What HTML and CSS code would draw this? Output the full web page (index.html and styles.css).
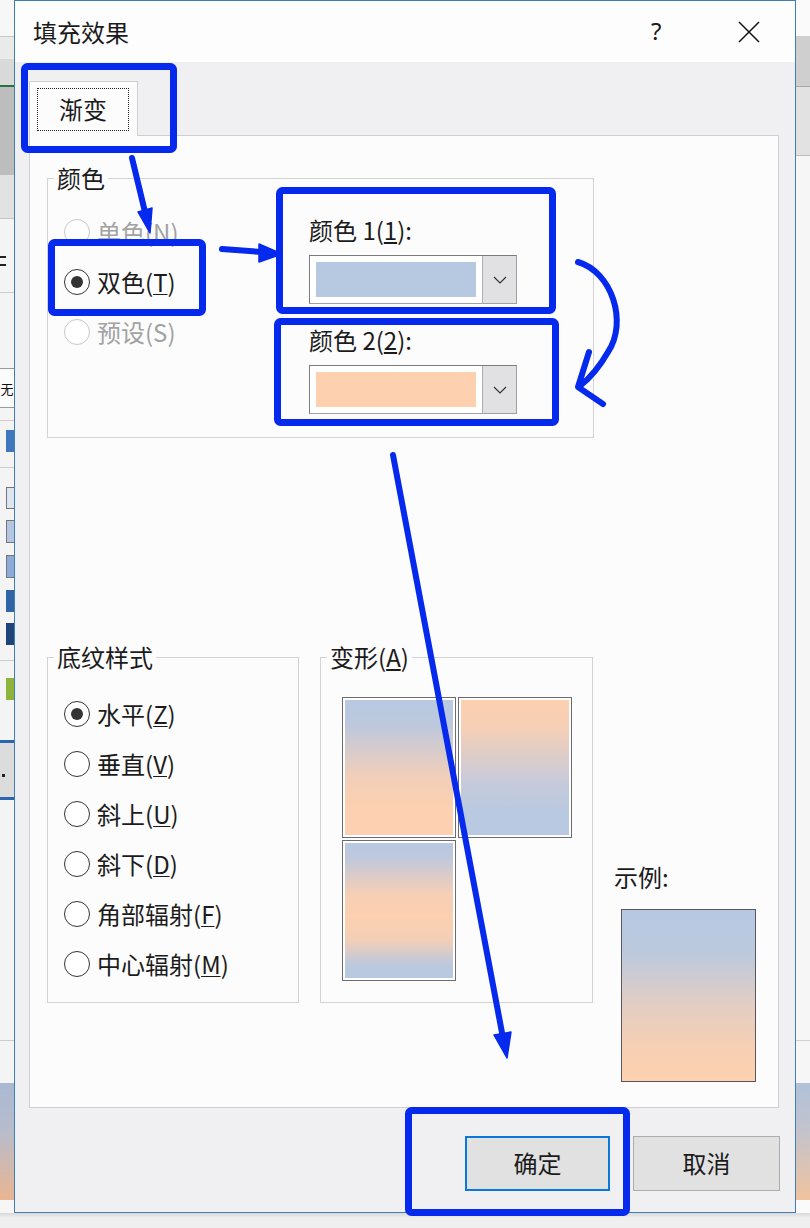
FILE: index.html
```html
<!DOCTYPE html>
<html lang="zh-CN">
<head>
<meta charset="utf-8">
<title>填充效果</title>
<link rel="stylesheet" href="styles.css">
</head>
<body>
<div class="screen">
  <div class="side side-left">
    <svg width="14" height="1213" viewBox="0 0 14 1213">
      <rect x="0" y="0" width="14" height="1213" fill="#f4f4f4"/>
      <rect x="0" y="0" width="14" height="36" fill="#f7f7f7"/>
      <rect x="0" y="36" width="14" height="1" fill="#c8c8c8"/>
      <rect x="0" y="37" width="14" height="22" fill="#eaeaea"/>
      <rect x="0" y="59" width="14" height="26" fill="#d9d9d9"/>
      <rect x="0" y="85" width="14" height="2" fill="#217346"/>
      <rect x="0" y="87" width="14" height="88" fill="#bdbdbd"/>
      <rect x="0" y="175" width="14" height="43" fill="#e2e2e2"/>
      <rect x="0" y="218" width="14" height="1" fill="#c4c4c4"/>
      <rect x="0" y="256" width="6" height="2" fill="#222"/>
      <rect x="0" y="264" width="6" height="2" fill="#222"/>
      <rect x="0" y="292" width="14" height="1" fill="#cccccc"/>
      <rect x="0" y="368" width="14" height="40" fill="#fbfbfb"/>
      <rect x="0" y="368" width="14" height="1" fill="#9a9a9a"/>
      <rect x="0" y="407" width="14" height="1" fill="#9a9a9a"/>
      <text x="0.5" y="394" font-size="13" font-family="Noto Sans CJK SC" fill="#111">无</text>
      <rect x="0" y="420" width="14" height="1" fill="#cccccc"/>
      <rect x="6" y="430" width="8" height="22" fill="#3f77bd"/>
      <rect x="0" y="467" width="14" height="1" fill="#cccccc"/>
      <rect x="6.5" y="487.5" width="8" height="21" fill="#dde5f0" stroke="#777"/>
      <rect x="6.5" y="520.5" width="8" height="22" fill="#b4c6e2" stroke="#777"/>
      <rect x="6.5" y="555.5" width="8" height="22" fill="#8eaad8" stroke="#777"/>
      <rect x="6" y="590" width="8" height="22" fill="#2f64a6"/>
      <rect x="6" y="623" width="8" height="22" fill="#1e4479"/>
      <rect x="0" y="660" width="14" height="1" fill="#cccccc"/>
      <rect x="6" y="678" width="8" height="22" fill="#8fb43c"/>
      <rect x="0" y="740" width="14" height="3" fill="#2b64b3"/>
      <rect x="0" y="743" width="14" height="55" fill="#dcdcdc"/>
      <rect x="2" y="774" width="3" height="3" fill="#222"/>
      <rect x="0" y="797" width="14" height="3" fill="#2b64b3"/>
      <rect x="0" y="1040" width="14" height="1" fill="#cccccc"/>
      <defs>
        <linearGradient id="lg" x1="0" y1="0" x2="0" y2="1">
          <stop offset="0" stop-color="#a9b9d3"/>
          <stop offset="0.4" stop-color="#b7bccb"/>
          <stop offset="1" stop-color="#e9b592"/>
        </linearGradient>
        <linearGradient id="rg" x1="0" y1="0" x2="0" y2="1">
          <stop offset="0" stop-color="#b0c1d9"/>
          <stop offset="0.4" stop-color="#c3c3cd"/>
          <stop offset="1" stop-color="#f0c39f"/>
        </linearGradient>
      </defs>
      <rect x="0" y="1083" width="14" height="117" fill="url(#lg)"/>
      <rect x="0" y="1200" width="14" height="13" fill="#f6f6f6"/>
    </svg>
  </div>

  <div class="dialog">
    <div class="titlebar">
      <div class="title">填充效果</div>
      <div class="help">?</div>
      <div class="close">
        <svg width="22" height="22" viewBox="0 0 22 22"><path d="M1 1 L21 21 M21 1 L1 21" stroke="#111" stroke-width="1.5" fill="none"/></svg>
      </div>
    </div>

    <div class="tabstrip">
      <div class="tab"><div class="tab-focus">渐变</div></div>
    </div>

    <div class="panel">
      <fieldset class="group group-color">
        <legend>颜色</legend>
        <div class="color-body">
          <div class="radios">
            <div class="radio disabled"><span class="dot"></span><span>单色(N)</span></div>
            <div class="radio checked"><span class="dot"></span><span>双色(<u>T</u>)</span></div>
            <div class="radio disabled"><span class="dot"></span><span>预设(S)</span></div>
          </div>
          <div class="pickers">
            <div class="picker-label">颜色 1(<u>1</u>):</div>
            <div class="combo">
              <div class="swatch-wrap"><div class="swatch swatch-blue"></div></div>
              <div class="drop"><svg width="14" height="8" viewBox="0 0 14 8"><path d="M1 1 L7 7 L13 1" stroke="#333" stroke-width="1.2" fill="none"/></svg></div>
            </div>
            <div class="picker-label second">颜色 2(<u>2</u>):</div>
            <div class="combo">
              <div class="swatch-wrap"><div class="swatch swatch-peach"></div></div>
              <div class="drop"><svg width="14" height="8" viewBox="0 0 14 8"><path d="M1 1 L7 7 L13 1" stroke="#333" stroke-width="1.2" fill="none"/></svg></div>
            </div>
          </div>
        </div>
      </fieldset>

      <div class="lower">
        <fieldset class="group group-pattern">
          <legend>底纹样式</legend>
          <div class="pattern-body">
            <div class="radio checked"><span class="dot"></span><span>水平(<u>Z</u>)</span></div>
            <div class="radio"><span class="dot"></span><span>垂直(<u>V</u>)</span></div>
            <div class="radio"><span class="dot"></span><span>斜上(<u>U</u>)</span></div>
            <div class="radio"><span class="dot"></span><span>斜下(<u>D</u>)</span></div>
            <div class="radio"><span class="dot"></span><span>角部辐射(<u>F</u>)</span></div>
            <div class="radio"><span class="dot"></span><span>中心辐射(<u>M</u>)</span></div>
          </div>
        </fieldset>

        <fieldset class="group group-variant">
          <legend>变形(<u>A</u>)</legend>
          <div class="tiles">
            <div class="tile"><div class="fill fill-down"></div></div>
            <div class="tile"><div class="fill fill-up"></div></div>
            <div class="tile"><div class="fill fill-mid"></div></div>
          </div>
        </fieldset>

        <div class="sample">
          <div class="sample-label">示例:</div>
          <div class="sample-box"></div>
        </div>
      </div>
    </div>

    <div class="buttons">
      <div class="btn btn-default">确定</div>
      <div class="btn">取消</div>
    </div>
  </div>

  <div class="side side-right">
    <svg width="14" height="1213" viewBox="0 0 14 1213">
      <rect x="0" y="0" width="14" height="1213" fill="#f6f6f6"/>
      <rect x="0" y="0" width="14" height="36" fill="#fafafa"/>
      <rect x="0" y="36" width="14" height="50" fill="#cfcfcf"/>
      <rect x="0" y="86" width="14" height="1" fill="#a8a8a8"/>
      <rect x="0" y="87" width="14" height="68" fill="#e2e2e2"/>
      <rect x="0" y="155" width="14" height="1" fill="#bbbbbb"/>
      <rect x="0" y="1040" width="14" height="1" fill="#d0d0d0"/>
      <rect x="0" y="1083" width="14" height="117" fill="url(#rg)"/>
      <rect x="0" y="1200" width="14" height="13" fill="#fafafa"/>
    </svg>
  </div>
  <div class="bottom-strip"></div>
</div>

<svg class="annotations" width="810" height="1228" viewBox="0 0 810 1228">
  <g fill="none" stroke="#0629ee" stroke-width="7" stroke-linejoin="round" stroke-linecap="round">
    <rect x="24.5" y="66.5" width="149" height="83" rx="3"/>
    <rect x="51.5" y="242.5" width="151" height="70" rx="3"/>
    <rect x="279.5" y="190.5" width="273" height="120" rx="3"/>
    <rect x="277.5" y="321.5" width="278" height="101" rx="3"/>
    <rect x="408.5" y="1110.5" width="218" height="102" rx="3"/>
  </g>
  <g fill="none" stroke="#0629ee" stroke-width="6" stroke-linecap="round" stroke-linejoin="round">
    <path d="M132 158 L145 212"/>
    <path d="M222 249 L262 252"/>
    <path d="M578 262 C 612 272, 628 322, 608 352 C 600 366, 590 378, 580 386"/>
    <path d="M589 352 L578 387 L603 404"/>
    <path d="M393 455 L503 1038"/>
  </g>
  <g fill="#0629ee" stroke="#0629ee" stroke-width="1.5" stroke-linejoin="round">
    <polygon points="150,233 152,208 138,212"/>
    <polygon points="282,254 259,244 259,262"/>
    <polygon points="507,1058 511,1032 494,1035"/>
  </g>
</svg>
</body>
</html>
```

FILE: styles.css
```css
* {
  box-sizing: border-box;
}

html, body {
  margin: 0;
  padding: 0;
}

body {
  position: relative;
  width: 810px;
  height: 1228px;
  overflow: hidden;
  background: #ececec;
  font-family: "Noto Sans CJK SC", "Noto Sans", sans-serif;
  color: #1b1b1b;
  font-size: 24px;
}

.screen {
  display: grid;
  grid-template-columns: 14px 782px 14px;
  grid-template-rows: 1213px 15px;
  width: 810px;
  height: 1228px;
}

.side svg {
  display: block;
}

.bottom-strip {
  grid-column: 1 / 4;
  background: linear-gradient(#d9d9d9, #efefef 5px, #efefef);
}

.dialog {
  display: flex;
  flex-direction: column;
  height: 1213px;
  border: 1px solid #3f7db5;
  background: #f0eff1;
}

/* title bar */
.titlebar {
  display: flex;
  align-items: center;
  height: 61px;
  flex: none;
  background: #fdfdfe;
  padding-left: 18px;
}

.title {
  flex: 1;
  font-size: 24px;
  line-height: 30px;
}

.help {
  width: 14px;
  font-size: 24px;
  line-height: 30px;
  font-family: "Noto Sans", sans-serif;
  margin-top: -2px;
}

.close {
  margin-left: 73px;
  margin-right: 35px;
  height: 22px;
}

.close svg {
  display: block;
}

/* tab strip */
.tabstrip {
  display: flex;
  align-items: flex-end;
  padding: 19px 0 0 14px;
  flex: none;
}

.tab {
  position: relative;
  z-index: 1;
  width: 109px;
  height: 55px;
  margin-bottom: -1px;
  background: #fcfcfd;
  border: 1px solid #cfcfd2;
  border-bottom: none;
  padding: 6px 0 0 7px;
}

.tab-focus {
  width: 92px;
  height: 43px;
  border: 1px dotted #222;
  text-align: center;
  line-height: 40px;
  font-size: 24px;
}

/* panel */
.panel {
  flex: none;
  height: 973px;
  margin: 0 16px 0 14px;
  background: #fcfcfd;
  border: 1px solid #cfcfd2;
}

.group {
  margin: 0;
  padding: 0;
  min-width: 0;
  border: 1px solid #d3d3d6;
}

.group legend {
  margin-left: 6px;
  padding: 0 3px;
  font-size: 24px;
  line-height: 26px;
}

.group-color {
  margin: 29px 0 0 17px;
  width: 547px;
}

.color-body {
  display: flex;
  height: 246px;
}

.radios {
  width: 261px;
  padding: 16px 0 0 16px;
}

.radio {
  display: flex;
  align-items: center;
  gap: 7px;
  height: 50px;
  font-size: 24px;
  line-height: 30px;
  white-space: nowrap;
}

.radio u {
  text-decoration-thickness: 1px;
  text-underline-offset: 2px;
}

.dot {
  flex: none;
  width: 26px;
  height: 26px;
  border-radius: 50%;
  border: 1.5px solid #333;
  background: #fff;
  display: flex;
  align-items: center;
  justify-content: center;
}

.radio.checked .dot::after {
  content: "";
  width: 12px;
  height: 12px;
  border-radius: 50%;
  background: #333;
}

.radio.disabled {
  color: #a2a2a2;
}

.radio.disabled .dot {
  border-color: #c8c8c8;
}

.pickers {
  width: 208px;
  padding-top: 24px;
}

.picker-label {
  font-size: 24px;
  line-height: 30px;
  white-space: nowrap;
}

.picker-label.second {
  margin-top: 21px;
}

.combo {
  display: flex;
  margin-top: 10px;
  width: 208px;
  height: 49px;
  border: 1px solid #7c7c7c;
  border-right-color: #a0a0a0;
  border-bottom-color: #a0a0a0;
  background: #fff;
}

.swatch-wrap {
  flex: 1;
  padding: 6px;
}

.swatch {
  width: 160px;
  height: 35px;
}

.swatch-blue {
  background: #b7c9e1;
}

.swatch-peach {
  background: #fdd0b0;
}

.drop {
  width: 34px;
  flex: none;
  background: #e1e1e3;
  border-left: 1px solid #adadad;
  display: flex;
  align-items: center;
  justify-content: center;
}

.drop svg {
  display: block;
}

/* lower area */
.lower {
  display: flex;
  align-items: flex-start;
  margin-top: 206px;
}

.group-pattern {
  margin-left: 17px;
  width: 252px;
  height: 359px;
}

.pattern-body {
  padding: 19px 0 0 16px;
}

.group-variant {
  margin-left: 21px;
  width: 273px;
  height: 359px;
}

.tiles {
  display: grid;
  grid-template-columns: 114px 114px;
  grid-auto-rows: 141px;
  gap: 2px;
  padding: 27px 0 0 21px;
}

.tile {
  border: 1px solid #6c6c70;
  background: #fff;
  padding: 2px;
}

.fill {
  width: 100%;
  height: 100%;
}

.fill-down {
  background: linear-gradient(to bottom, #b8c9e1 0%, #bcc8de 18%, #f2cfb8 58%, #fcd0b0 80%, #fcd0b0 100%);
}

.fill-up {
  background: linear-gradient(to bottom, #fcd0b0 0%, #f6cfb6 20%, #c6cadb 62%, #b8c9e1 85%, #b8c9e1 100%);
}

.fill-mid {
  background: linear-gradient(to bottom, #b8c9e1 0%, #bdc8dd 10%, #f6cfb5 38%, #fcd0b0 55%, #f3cfb6 72%, #bcc8de 90%, #b8c9e1 100%);
}

.sample {
  margin-left: 21px;
  padding-top: 218px;
}

.sample-label {
  font-size: 24px;
  line-height: 30px;
}

.sample-box {
  margin: 17px 0 0 7px;
  width: 135px;
  height: 173px;
  border: 1px solid #58585c;
  background: linear-gradient(to bottom, #b6c9e3 0%, #bcc9dd 25%, #e2cdc4 55%, #f7cfb3 80%, #fdd1b0 100%);
}

/* buttons */
.buttons {
  display: flex;
  justify-content: flex-end;
  gap: 23px;
  padding: 28px 15px 0 0;
}

.btn {
  width: 147px;
  height: 55px;
  background: #e1e1e2;
  border: 1px solid #adadad;
  font-size: 24px;
  line-height: 51px;
  text-align: center;
}

.btn-default {
  width: 145px;
  border: 2px solid #0a78d8;
  line-height: 50px;
}

/* annotation overlay */
.annotations {
  position: absolute;
  left: 0;
  top: 0;
  pointer-events: none;
}
```
